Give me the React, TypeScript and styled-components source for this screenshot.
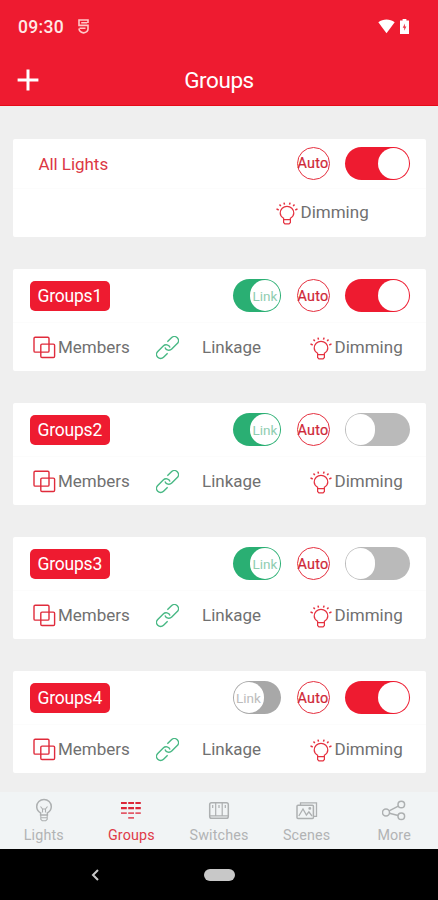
import React from 'react';
import styled, { createGlobalStyle } from 'styled-components';

const RED = '#ee1b30';
const GREEN = '#2aaf73';

const GlobalStyle = createGlobalStyle`
  * { box-sizing: border-box; }
  body { margin: 0; background: #efefef; font-family: Roboto, sans-serif; }
`;

const Screen = styled.div`
  width: 438px;
  height: 900px;
  display: flex;
  flex-direction: column;
  overflow: hidden;
  background: #efefef;
  svg { display: block; flex: none; }
`;

const Header = styled.header`
  height: 106px;
  flex: none;
  background: ${RED};
  border-bottom: 1px solid #e60a18;
  color: #fff;
`;

const StatusBar = styled.div`
  height: 53px;
  padding: 0 29px 0 18px;
  display: flex;
  align-items: center;
`;

const Clock = styled.span`
  width: 60px;
  font-size: 17.5px;
  font-weight: 500;
  letter-spacing: 0.3px;
  color: #ffe9e6;
`;

const StatusIcons = styled.div`
  margin-left: auto;
  display: flex;
  align-items: center;
  gap: 5px;
`;

const TitleBar = styled.div`
  height: 53px;
  padding: 0 17px;
  display: grid;
  grid-template-columns: 22px 1fr 22px;
  align-items: center;
`;

const Title = styled.h1`
  margin: 1px 0 0;
  font-size: 22.5px;
  line-height: 28px;
  font-weight: 400;
  text-align: center;
  letter-spacing: -0.45px;
`;

const Content = styled.main`
  flex: 1;
  min-height: 0;
  padding: 32.5px 12.5px 0 13px;
  display: flex;
  flex-direction: column;
  gap: 32px;
`;

const Card = styled.section<{ $short?: boolean }>`
  height: ${p => (p.$short ? 98.5 : 102)}px;
  flex: none;
  background: #fff;
  border-radius: 2px;
`;

const ControlRow = styled.div<{ $short?: boolean }>`
  height: ${p => (p.$short ? 50 : 54)}px;
  padding: 0 15.5px 0 16.5px;
  display: flex;
  align-items: center;
  border-bottom: 1px solid #fcfcfc;
`;

const ActionRow = styled.div<{ $short?: boolean }>`
  height: ${p => (p.$short ? 49 : 50)}px;
  display: grid;
  grid-template-columns: ${p => (p.$short ? '263px 1fr' : '20px 122.5px 46.5px 108px 1fr')};
  align-items: center;
`;

const Controls = styled.div`
  margin-left: auto;
  display: flex;
  align-items: center;
  gap: 15.5px;
`;

const AllName = styled.span`
  padding: 2px 0 0 9px;
  font-size: 17px;
  letter-spacing: -0.05px;
  color: #dc3744;
`;

const GroupName = styled.span`
  width: 80.5px;
  height: 30px;
  border-radius: 5px;
  background: ${RED};
  color: #fff;
  font-size: 17.5px;
  line-height: 31px;
  text-align: center;
  letter-spacing: -0.2px;
`;

const Track = styled.span<{ $w: number; $on: boolean; $color: string }>`
  width: ${p => p.$w}px;
  height: 33px;
  border-radius: 17px;
  padding: 1px;
  display: flex;
  justify-content: ${p => (p.$on ? 'flex-end' : 'flex-start')};
  background: ${p => p.$color};
`;

const Knob = styled.span<{ $size: number; $color: string }>`
  width: ${p => p.$size}px;
  height: 31px;
  border-radius: 16px;
  background: #fff;
  display: flex;
  align-items: center;
  justify-content: center;
  font-size: 13.5px;
  color: ${p => p.$color};
`;

const Auto = styled.span`
  width: 33px;
  height: 33px;
  border: 1px solid #e5303f;
  border-radius: 50%;
  display: flex;
  align-items: center;
  justify-content: center;
  padding-top: 1px;
  font-size: 14.4px;
  letter-spacing: 0.3px;
  -webkit-text-stroke: 0.2px #cf2837;
  color: #cf2837;
`;

const Action = styled.span<{ $gap: number }>`
  display: flex;
  align-items: center;
  gap: ${p => p.$gap}px;
`;

const Label = styled.span`
  font-size: 17px;
  letter-spacing: 0;
  color: #707070;
  line-height: 20px;
  padding-bottom: 2px;
`;

const TabBar = styled.nav`
  height: 57px;
  flex: none;
  display: grid;
  grid-template-columns: repeat(5, 1fr);
  background: #f1f4f5;
`;

const Tab = styled.div<{ $active?: boolean }>`
  display: flex;
  flex-direction: column;
  align-items: center;
  padding-top: 6px;
  gap: 2px;
  font-size: 14.3px;
  line-height: 20px;
  letter-spacing: 0.15px;
  color: ${p => (p.$active ? '#df3a47' : '#b1b3b4')};
`;

const SystemBar = styled.footer`
  height: 51px;
  flex: none;
  background: #000;
  display: grid;
  grid-template-columns: 190px 58px 190px;
  justify-items: center;
  align-items: center;
`;

const HomePill = styled.span`
  width: 31px;
  height: 12px;
  border-radius: 6px;
  background: #c8c8c8;
`;

const BulbIcon = () => (
  <svg width="22" height="23" viewBox="0 0 22 23" fill="none" stroke="#e5303f" strokeWidth="1.2">
    <path d="M7.6 17.6v-1.4C5.5 15 4.2 13 4.2 11.1a6.8 6.8 0 0 1 13.6 0c0 1.9-1.3 3.9-3.4 5.1v1.4z" />
    <path d="M7.6 17.6v2.9l1.3 1.3h4.2l1.3-1.3v-2.9" />
    <path d="M.5 6.9l2.2 1.1M3.5 2.5l1.3 1.6M8 .6l.5 2M13.5 2.6l.6-2M17.2 4.1l1.3-1.6M19.3 8l2.2-1.1" strokeWidth="1.5" />
  </svg>
);

const MembersIcon = () => (
  <svg width="23" height="24" viewBox="0 0 23 24" fill="none" stroke="#e02b3b" strokeWidth="1.4">
    <rect x="1" y="1.3" width="15" height="14.8" rx="1.2" />
    <rect x="7.8" y="8.1" width="13.8" height="13.4" rx="1.2" />
  </svg>
);

const ChainIcon = () => (
  <svg width="23" height="24" viewBox="0 0 23 24" fill="none" stroke="#48b884" strokeWidth="1.4">
    <g transform="rotate(-45 11.5 11.5)">
      <path d="M7.6 15.6H1.8a4.1 4.1 0 0 1 0-8.2h7.8a4.1 4.1 0 0 1 3.7 5.9" />
      <path d="M15.4 7.4h5.8a4.1 4.1 0 0 1 0 8.2h-7.8a4.1 4.1 0 0 1-3.7-5.9" />
    </g>
  </svg>
);

const Dimming = () => (
  <Action $gap={2.5}>
    <BulbIcon />
    <Label>Dimming</Label>
  </Action>
);

const PowerSwitch = ({ on }: { on: boolean }) => (
  <Track $w={65} $on={on} $color={on ? RED : '#bababa'}>
    <Knob $size={on ? 31 : 29} $color="#fff" />
  </Track>
);

const LinkSwitch = ({ on }: { on: boolean }) => (
  <Track $w={48.5} $on={on} $color={on ? GREEN : '#a8a8a8'}>
    <Knob $size={30} $color={on ? '#8fcdb0' : '#bcbcbc'}>Link</Knob>
  </Track>
);

const tabStroke = { fill: 'none', stroke: '#adb0b1', strokeWidth: 1.5 };

const tabs: { name: string; icon: React.ReactNode }[] = [
  {
    name: 'Lights',
    icon: (
      <svg width="24" height="25" viewBox="0 0 24 25" {...tabStroke}>
        <path d="M8.6 17v-2.2A7.3 7.3 0 0 1 4.7 8.7a7.3 7.3 0 0 1 14.6 0 7.3 7.3 0 0 1-3.9 6.1V17z" />
        <path d="M8.8 17v4.3l1.4 1.4h3.6l1.4-1.4V17M8.8 19.7h6.4M10.5 14.5V11l-2-2.5M13.5 14.5V11l2-2.5M10.5 11h3" strokeWidth="1.1" />
      </svg>
    ),
  },
  {
    name: 'Groups',
    icon: (
      <svg width="24" height="25" viewBox="0 0 24 25" fill="none" stroke="#dc2638">
        <path d="M2 5h5.8M9.2 5H15M16.4 5h5.4M2 10.2h5.8M9.2 10.2H15M16.4 10.2h5.4" strokeWidth="2.2" />
        <path d="M2 15.1h5.8M9.2 15.1H15M16.4 15.1h5.4M9.2 19.9H15" strokeWidth="1.9" opacity=".75" />
      </svg>
    ),
  },
  {
    name: 'Switches',
    icon: (
      <svg width="24" height="25" viewBox="0 0 24 25" {...tabStroke}>
        <rect x="2.7" y="4.8" width="18.6" height="15.4" rx="1.8" />
        <path d="M8.7 4.8v13M15.2 4.8v13M5.7 7v3M12 7v3M18.3 7v3M2.7 17.8h18.6" strokeWidth="1.2" />
      </svg>
    ),
  },
  {
    name: 'Scenes',
    icon: (
      <svg width="24" height="25" viewBox="0 0 24 25" {...tabStroke}>
        <rect x="2" y="7.3" width="16.4" height="13.3" rx="1" />
        <path d="M5.5 7V4.8h16v13.5h-2.9M3.8 18l4.2-7 3.4 6 2.5-3.2 3.1 4.2" strokeWidth="1.3" />
        <circle cx="14.8" cy="10.4" r=".7" />
      </svg>
    ),
  },
  {
    name: 'More',
    icon: (
      <svg width="24" height="25" viewBox="0 0 24 25" {...tabStroke}>
        <circle cx="4" cy="14.5" r="3.5" />
        <circle cx="19.3" cy="6.5" r="3.3" />
        <circle cx="19.3" cy="18.3" r="3.3" />
        <path d="M7.1 12.9l9.2-4.8M7.4 15.3l8.7 2.1" />
      </svg>
    ),
  },
];

const groups = [
  { name: 'Groups1', linked: true, on: true },
  { name: 'Groups2', linked: true, on: false },
  { name: 'Groups3', linked: true, on: false },
  { name: 'Groups4', linked: false, on: true },
];

export default function App() {
  return (
    <>
      <GlobalStyle />
      <Screen>
        <Header>
          <StatusBar>
            <Clock>09:30</Clock>
            <svg width="11" height="15" viewBox="0 0 11 15" fill="none" stroke="#ffc8c8" strokeWidth="1.6">
              <path d="M10 4V1H1v5.4h9v3.5C10 12 8 13.3 5.5 13.9 3 13.3 1 12 1 9.5M3.2 3.8h6M1.5 9.3h6" />
            </svg>
            <StatusIcons>
              <svg width="17" height="15" viewBox="0 0 17 15" fill="#fff">
                <path d="M.3 3.3C5-.5 12-.5 16.7 3.3L8.5 14.2z" />
              </svg>
              <svg width="9" height="15" viewBox="0 0 9 15">
                <path d="M0 1.6h2.6V0h3.8v1.6H9V15H0z" fill="#fff" />
                <path d="M4.9 4.4L2.7 8.7h1.5v3.1l2.2-4.3H4.9z" fill="#ec3a4b" />
              </svg>
            </StatusIcons>
          </StatusBar>
          <TitleBar>
            <svg width="22" height="22" viewBox="0 0 22 22" stroke="#fff" strokeWidth="3">
              <path d="M11 .6v20.8M.6 11h20.8" />
            </svg>
            <Title>Groups</Title>
          </TitleBar>
        </Header>
        <Content>
          <Card $short>
            <ControlRow $short>
              <AllName>All Lights</AllName>
              <Controls>
                <Auto>Auto</Auto>
                <PowerSwitch on />
              </Controls>
            </ControlRow>
            <ActionRow $short>
              <span />
              <Dimming />
            </ActionRow>
          </Card>
          {groups.map(g => (
            <Card key={g.name}>
              <ControlRow>
                <GroupName>{g.name}</GroupName>
                <Controls>
                  <LinkSwitch on={g.linked} />
                  <Auto>Auto</Auto>
                  <PowerSwitch on={g.on} />
                </Controls>
              </ControlRow>
              <ActionRow>
                <span />
                <Action $gap={2}>
                  <MembersIcon />
                  <Label>Members</Label>
                </Action>
                <ChainIcon />
                <Label>Linkage</Label>
                <Dimming />
              </ActionRow>
            </Card>
          ))}
        </Content>
        <TabBar>
          {tabs.map(t => (
            <Tab key={t.name} $active={t.name === 'Groups'}>
              {t.icon}
              {t.name}
            </Tab>
          ))}
        </TabBar>
        <SystemBar>
          <svg width="8" height="12" viewBox="0 0 8 12" fill="none" stroke="#c8c8c8" strokeWidth="2">
            <path d="M7 1L2 6l5 5" />
          </svg>
          <HomePill />
        </SystemBar>
      </Screen>
    </>
  );
}
